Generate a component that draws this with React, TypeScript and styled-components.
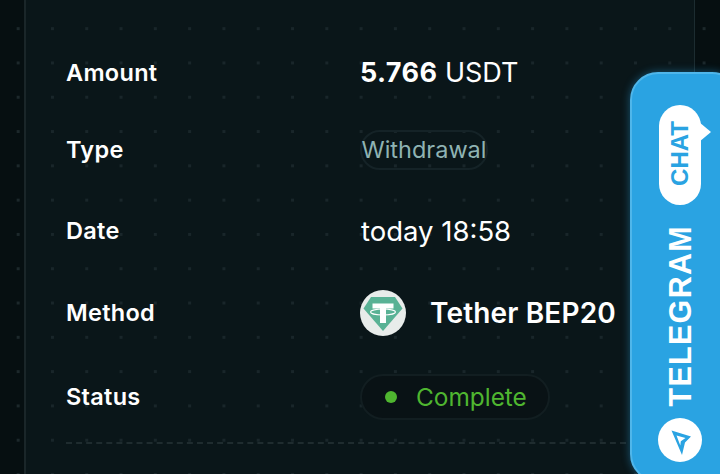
import React, { FC } from 'react';
import styled, { createGlobalStyle } from 'styled-components';

const GlobalStyle = createGlobalStyle`
  html, body {
    margin: 0;
    padding: 0;
    background: #050f11;
  }
`;

const Page = styled.div`
  position: relative;
  width: 720px;
  height: 474px;
  overflow: hidden;
  padding-left: 24px;
  box-sizing: border-box;
  font-family: Inter, "Liberation Sans", sans-serif;
  background-color: #060f11;
  background-image: radial-gradient(#1c282b 1.4px, transparent 1.6px);
  background-size: 34.3px 34.3px;
  background-position: 1px 11.5px;
`;

const Panel = styled.main`
  box-sizing: border-box;
  width: 671px;
  height: 474px;
  padding: 59px 0 0 40px;
  border-left: 2px solid #1a2629;
  border-right: 1px solid #1c2c30;
  background-color: #0a1619;
  background-image: radial-gradient(#19262a 1.4px, transparent 1.6px);
  background-size: 34.3px 34.3px;
  background-position: -25px 11.5px;
`;

const Row = styled.div<{ $height: number; $after: number }>`
  display: grid;
  grid-template-columns: 294px 1fr;
  align-items: center;
  height: ${({ $height }) => $height}px;
  line-height: 28px;
  margin-bottom: ${({ $after }) => $after}px;
`;

const Label = styled.div`
  color: #fff;
  font-size: 23.5px;
  font-weight: 600;
  letter-spacing: 0.3px;
`;

const Amount = styled.div`
  color: #fff;
  font-size: 27px;
  font-weight: 400;
  b {
    font-weight: 700;
    letter-spacing: 0.4px;
  }
`;

const TypeChip = styled.div`
  box-sizing: border-box;
  width: 128px;
  height: 40px;
  display: flex;
  align-items: center;
  justify-content: center;
  border: 2px solid #152327;
  border-radius: 20px;
  color: #8fb3b3;
  font-size: 23.5px;
`;

const DateText = styled.div`
  color: #fff;
  font-size: 27.5px;
  margin-left: 1px;
`;

const Method = styled.div`
  display: flex;
  align-items: center;
  gap: 24px;
  color: #fff;
  font-size: 28px;
  font-weight: 600;
  letter-spacing: 0.15px;
`;

const CoinIcon = styled.svg`
  width: 46px;
  height: 46px;
  display: block;
`;

const StatusChip = styled.div`
  box-sizing: border-box;
  width: 190px;
  height: 46px;
  display: flex;
  align-items: center;
  gap: 19px;
  padding-left: 23px;
  border: 2px solid #121e21;
  border-radius: 23px;
  background: #091215;
  color: #4fb630;
  font-size: 24.4px;
`;

const Dot = styled.span`
  width: 12px;
  height: 12px;
  border-radius: 50%;
  background: #4fb630;
`;

const Divider = styled.div`
  width: 560px;
  margin-top: 22px;
  border-top: 2px dashed #1f2c2f;
`;

const TelegramTab = styled.aside`
  position: absolute;
  left: 630px;
  top: 72px;
  box-sizing: border-box;
  width: 110px;
  height: 410px;
  padding: 31px 0 0 27px;
  display: flex;
  flex-direction: column;
  align-items: flex-start;
  background: #2aa3e2;
  border: 2px solid #4fb6ea;
  border-radius: 28px;
  box-shadow: 0 0 8px rgba(43, 165, 228, 0.45);
`;

const Bubble = styled.div`
  position: relative;
  width: 42px;
  height: 100px;
  display: flex;
  align-items: center;
  justify-content: center;
  border-radius: 21px;
  background: #fff;
  color: #2aa3e2;
  font-family: "Liberation Sans", sans-serif;
  font-size: 24px;
  font-weight: 700;
  writing-mode: vertical-rl;
  &::after {
    content: '';
    position: absolute;
    left: 40px;
    top: 17px;
    border-left: 12px solid #fff;
    border-top: 10px solid transparent;
    border-bottom: 10px solid transparent;
  }
`;

const ChatText = styled.span`
  display: block;
  transform: translateY(-2px) rotate(180deg);
`;

const TitleText = styled.span`
  display: block;
  transform: rotate(180deg);
`;

const TabTitle = styled.div`
  margin-top: 20px;
  width: 42px;
  height: 182px;
  display: flex;
  align-items: center;
  justify-content: center;
  color: #fff;
  font-family: "Liberation Sans", sans-serif;
  font-size: 30.5px;
  font-weight: 700;
  letter-spacing: 1.3px;
  writing-mode: vertical-rl;
`;

const PlaneBadge = styled.div`
  margin-top: 11px;
  margin-left: -1px;
  width: 44px;
  height: 44px;
  border-radius: 50%;
  background: #fff;
`;

const TetherLogo: FC = () => (
  <CoinIcon viewBox="0 0 46 46">
    <circle cx="23" cy="23" r="23" fill="#e8ecea" />
    <path d="M11 7H35L42.5 18.5L23 41L3.5 18.5Z" fill="#59b295" />
    <path d="M12.5 13.5H33.5V18.5H26V21H20V18.5H12.5Z" fill="#fff" />
    <rect x="20" y="20" width="6" height="13" fill="#fff" />
    <ellipse cx="23" cy="22" rx="12.5" ry="3" fill="none" stroke="#fff" strokeWidth="1.1" />
  </CoinIcon>
);

const PlaneIcon: FC = () => (
  <svg width="44" height="44" viewBox="0 0 44 44">
    <path d="M13.5 12.5L33 18.5L27 24.5L24 37Z" fill="#2aa3e2" />
    <path d="M18.5 17.5L27.5 20L22.8 23.3L22.3 27.5Z" fill="#fff" />
  </svg>
);

const App: FC = () => (
  <Page>
    <GlobalStyle />
    <Panel>
      <Row $height={28} $after={43}>
        <Label>Amount</Label>
        <Amount>
          <b>5.766</b> USDT
        </Amount>
      </Row>
      <Row $height={40} $after={47}>
        <Label>Type</Label>
        <TypeChip>Withdrawal</TypeChip>
      </Row>
      <Row $height={28} $after={45}>
        <Label>Date</Label>
        <DateText>today 18:58</DateText>
      </Row>
      <Row $height={46} $after={38}>
        <Label>Method</Label>
        <Method>
          <TetherLogo />
          Tether BEP20
        </Method>
      </Row>
      <Row $height={46} $after={0}>
        <Label>Status</Label>
        <StatusChip>
          <Dot />
          Complete
        </StatusChip>
      </Row>
      <Divider />
    </Panel>
    <TelegramTab>
      <Bubble>
        <ChatText>CHAT</ChatText>
      </Bubble>
      <TabTitle>
        <TitleText>TELEGRAM</TitleText>
      </TabTitle>
      <PlaneBadge>
        <PlaneIcon />
      </PlaneBadge>
    </TelegramTab>
  </Page>
);

export default App;
